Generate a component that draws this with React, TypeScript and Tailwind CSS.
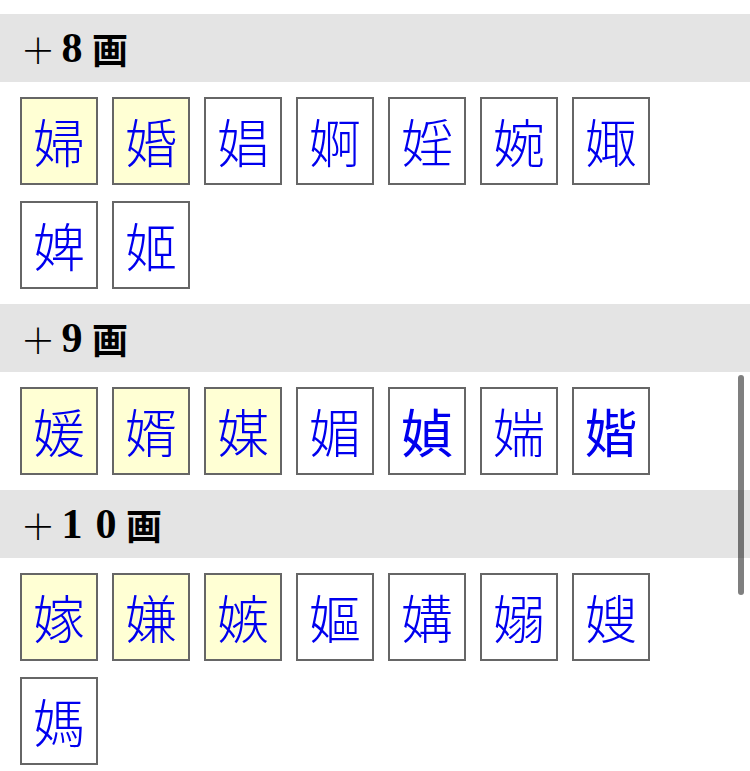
import React from "react";

type Kanji = { c: string; hl?: boolean; bold?: boolean };

const sections: { digits: string[]; items: Kanji[] }[] = [
  {
    digits: ["8"],
    items: [
      { c: "婦", hl: true },
      { c: "婚", hl: true },
      { c: "娼" },
      { c: "婀" },
      { c: "婬" },
      { c: "婉" },
      { c: "娵" },
      { c: "婢" },
      { c: "姬" },
    ],
  },
  {
    digits: ["9"],
    items: [
      { c: "媛", hl: true },
      { c: "婿", hl: true },
      { c: "媒", hl: true },
      { c: "媚" },
      { c: "媜", bold: true },
      { c: "媏" },
      { c: "媘", bold: true },
    ],
  },
  {
    digits: ["1", "0"],
    items: [
      { c: "嫁", hl: true },
      { c: "嫌", hl: true },
      { c: "嫉", hl: true },
      { c: "嫗" },
      { c: "媾" },
      { c: "嫋" },
      { c: "嫂" },
      { c: "媽" },
    ],
  },
];

function Header({ digits }: { digits: string[] }) {
  return (
    <div className="h-[68px] bg-[#e4e4e4] flex items-center pl-[21px] text-black">
      <span className="w-[34px] flex justify-center text-[35px] leading-none font-light font-['Noto_Sans_CJK_JP',sans-serif]">
        ＋
      </span>
      {digits.map((d, i) => (
        <span
          key={i}
          className="w-[34px] flex justify-center text-[42px] leading-none font-bold font-['Liberation_Serif',serif]"
        >
          {d}
        </span>
      ))}
      <span className="ml-[3px] text-[36px] leading-none font-bold font-['Noto_Sans_CJK_JP',sans-serif]">
        画
      </span>
    </div>
  );
}

function Tile({ k }: { k: Kanji }) {
  return (
    <div
      className={
        "w-[78px] h-[88px] border-2 border-[#666666] flex items-center justify-center " +
        (k.hl ? "bg-[#ffffd4]" : "bg-white")
      }
    >
      <span
        className={
          "text-[52px] leading-none text-[#0000ee] font-['Noto_Sans_CJK_JP',sans-serif] " +
          (k.bold ? "font-normal" : "font-light")
        }
      >
        {k.c}
      </span>
    </div>
  );
}

export default function App() {
  return (
    <div className="relative w-[750px] h-[771px] overflow-hidden bg-white pt-[14px]">
      {sections.map((s, i) => (
        <div key={i}>
          <Header digits={s.digits} />
          <div className="flex flex-wrap gap-x-[14px] gap-y-[16px] px-[20px] py-[15px]">
            {s.items.map((k, j) => (
              <Tile key={j} k={k} />
            ))}
          </div>
        </div>
      ))}
      <div className="absolute left-[738px] top-[375px] w-[6px] h-[220px] rounded-full bg-black/50" />
    </div>
  );
}
